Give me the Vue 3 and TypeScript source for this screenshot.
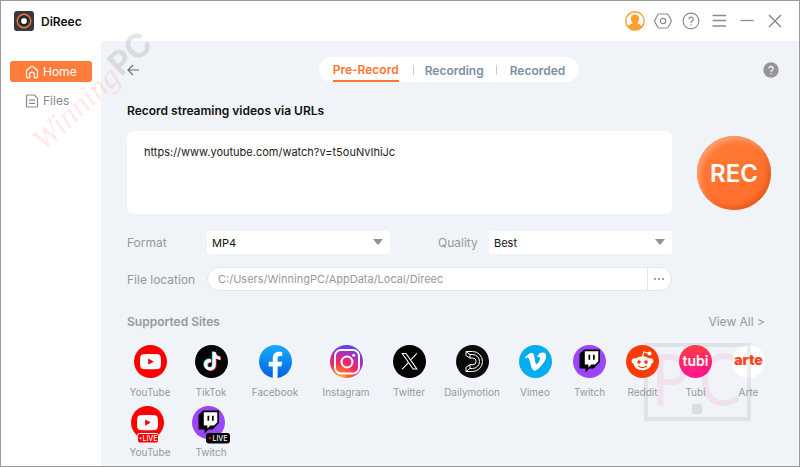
<script setup lang="ts">
import { ref } from 'vue'

interface Site {
  name: string
  icon: string
  live?: boolean
}

const tabs = ['Pre-Record', 'Recording', 'Recorded']
const activeTab = ref('Pre-Record')
const url = ref('https://www.youtube.com/watch?v=t5ouNvIhiJc')
const format = ref('MP4')
const quality = ref('Best')
const location = ref('C:/Users/WinningPC/AppData/Local/Direec')

const sites: Site[] = [
  { name: 'YouTube', icon: 'youtube' },
  { name: 'TikTok', icon: 'tiktok' },
  { name: 'Facebook', icon: 'facebook' },
  { name: 'Instagram', icon: 'instagram' },
  { name: 'Twitter', icon: 'x' },
  { name: 'Dailymotion', icon: 'dailymotion' },
  { name: 'Vimeo', icon: 'vimeo' },
  { name: 'Twitch', icon: 'twitch' },
  { name: 'Reddit', icon: 'reddit' },
  { name: 'Tubi', icon: 'tubi' },
  { name: 'Arte', icon: 'arte' },
  { name: 'YouTube', icon: 'youtube', live: true },
  { name: 'Twitch', icon: 'twitch', live: true },
]
</script>

<template>
  <div class="window">
    <svg class="sprite" aria-hidden="true">
      <defs>
        <linearGradient id="g-fb" x1="0" y1="0" x2="0" y2="1">
          <stop offset="0" stop-color="#18acfe" />
          <stop offset="1" stop-color="#0163e0" />
        </linearGradient>
        <radialGradient id="g-ig" cx="0.3" cy="1.05" r="1.05">
          <stop offset="0" stop-color="#fdd24f" />
          <stop offset="0.25" stop-color="#ff6a35" />
          <stop offset="0.5" stop-color="#f5265c" />
          <stop offset="0.75" stop-color="#b92bb6" />
          <stop offset="1" stop-color="#5b45e8" />
        </radialGradient>
        <linearGradient id="g-tubi" x1="0" y1="0" x2="0.2" y2="1">
          <stop offset="0" stop-color="#ff3f3a" />
          <stop offset="1" stop-color="#ff1690" />
        </linearGradient>
        <path id="note" d="M12.525.02c1.31-.02 2.61-.01 3.91-.02.08 1.53.63 3.09 1.75 4.17 1.12 1.11 2.7 1.62 4.24 1.79v4.03c-1.44-.05-2.89-.35-4.2-.97-.57-.26-1.1-.59-1.62-.93-.01 2.92.01 5.84-.02 8.75-.08 1.4-.54 2.79-1.35 3.94-1.31 1.92-3.58 3.17-5.91 3.21-1.43.08-2.86-.31-4.08-1.03-2.02-1.19-3.44-3.37-3.65-5.71-.02-.5-.03-1-.01-1.49.18-1.9 1.12-3.72 2.58-4.96 1.66-1.44 3.98-2.13 6.15-1.72.02 1.48-.04 2.96-.04 4.44-.99-.32-2.15-.23-3.02.37-.63.41-1.11 1.04-1.36 1.75-.21.51-.15 1.07-.14 1.61.24 1.64 1.82 3.02 3.5 2.87 1.12-.01 2.19-.66 2.77-1.61.19-.33.4-.67.41-1.06.1-1.79.06-3.57.07-5.36.01-4.03-.01-8.05.02-12.07z" />
      </defs>
      <symbol id="youtube" viewBox="0 0 33 33">
        <circle cx="16.500" cy="16.500" r="16.500" fill="#f00" />
        <path d="M9 9.300q7.500-.8 15 0 2.500.2 2.700 2.700.6 4.500 0 9.200-.2 2.500-2.700 2.700-7.500.8-15 0-2.500-.2-2.700-2.700-.6-4.700 0-9.200.2-2.500 2.700-2.700Z" fill="#fff" />
        <path d="M14.200 13.500v6.200l5.500-3.100Z" fill="#f00" />
      </symbol>
      <symbol id="tiktok" viewBox="0 0 33 33">
        <circle cx="16.500" cy="16.500" r="16.500" fill="#050505" />
        <use href="#note" transform="translate(7.200 6.500) scale(.77)" fill="#25f4ee" />
        <use href="#note" transform="translate(8.800 7.600) scale(.77)" fill="#fe2c55" />
        <use href="#note" transform="translate(8 7) scale(.77)" fill="#fff" />
      </symbol>
      <symbol id="facebook" viewBox="0 0 33 33">
        <circle cx="16.500" cy="16.500" r="16.500" fill="url(#g-fb)" />
        <path d="M13.800 33V21.500H9.700v-4.700h4.100v-3.500c0-4.300 2.300-6.500 6.100-6.500 1.500 0 2.700.2 3.300.3V11h-2.100c-1.900 0-2.500 1.100-2.500 2.500v3.300h4.600l-.8 4.700h-3.800V32.800q-2.400.4-4.800.2Z" fill="#fff" />
      </symbol>
      <symbol id="instagram" viewBox="0 0 33 33">
        <circle cx="16.500" cy="16.500" r="16.500" fill="url(#g-ig)" />
        <rect x="5" y="5" width="24" height="23.500" rx="6" fill="none" stroke="#fff" stroke-width="2" />
        <circle cx="17" cy="17" r="5.500" fill="none" stroke="#fff" stroke-width="2" />
        <circle cx="23.700" cy="10.200" r="1.500" fill="#fff" />
      </symbol>
      <symbol id="x" viewBox="0 0 33 33">
        <circle cx="16.500" cy="16.500" r="16.500" fill="#000" />
        <g fill="none" stroke="#fff" stroke-width="1.100">
          <path d="M9.300 8.500h3.700l10.800 15.500h-3.700Z" />
          <path d="M23.800 8.300 17.600 15M15.400 17.600 9 24.400" />
        </g>
      </symbol>
      <symbol id="dailymotion" viewBox="0 0 33 33">
        <circle cx="16.500" cy="16.500" r="16.500" fill="#0a0a0a" />
        <g fill="none" stroke="#fff" stroke-width="1" stroke-linejoin="round">
          <path d="M10 6.500h6.500a10 10 0 0 1 0 20H10v-4.200l4-2.600h2.800a3.300 3.300 0 0 0 0-6.600H14l-4-2.600Z" />
          <path d="m10 6.500 4 3h2.500a7 7 0 0 1 0 14H14l-4 3" />
          <path d="M14 9.500v3.600M14 19.700v3.800" />
        </g>
      </symbol>
      <symbol id="vimeo" viewBox="0 0 33 33">
        <circle cx="16.500" cy="16.500" r="16.500" fill="#00adef" />
        <path transform="translate(6 6) scale(.88)" fill="#fff" d="M23.977 6.416c-.105 2.338-1.739 5.543-4.894 9.609-3.268 4.247-6.026 6.370-8.290 6.370-1.409 0-2.578-1.294-3.553-3.881L5.322 11.400C4.603 8.816 3.834 7.522 3.010 7.522c-.179 0-.806.378-1.881 1.132L0 7.197c1.185-1.044 2.351-2.084 3.501-3.128C5.080 2.701 6.266 1.984 7.055 1.910c1.867-.18 3.016 1.100 3.447 3.838.465 2.953.789 4.789.971 5.507.539 2.450 1.131 3.674 1.776 3.674.502 0 1.256-.796 2.265-2.385 1.004-1.589 1.540-2.797 1.612-3.628.144-1.371-.395-2.061-1.614-2.061-.574 0-1.167.121-1.777.391 1.186-3.868 3.434-5.757 6.762-5.637 2.473.060 3.628 1.664 3.493 4.797Z" />
      </symbol>
      <symbol id="twitch" viewBox="0 0 33 33">
        <circle cx="16.500" cy="16.500" r="16.500" fill="#9b45ff" />
        <path d="M11 4.500h16V17l-6.500 6.500h-4L12.500 27.500v-4h-6V9Z" fill="#000" />
        <path d="M11.800 6.200h13.500v10l-3.200 3.200h-3.700l-3 3v-3h-3.600Z" fill="#fff" />
        <path d="M15.500 9.800h1.700v5h-1.700ZM20 9.800h1.700v5H20Z" fill="#000" />
      </symbol>
      <symbol id="reddit" viewBox="0 0 33 33">
        <circle cx="16.500" cy="16.500" r="16.500" fill="#ff3a00" />
        <path d="m16.500 12 1.300-5 4.500 1.200" fill="none" stroke="#fff" stroke-width="1.200" />
        <circle cx="23.500" cy="8.500" r="2" fill="#fff" />
        <circle cx="8.300" cy="16" r="2.700" fill="#fff" />
        <circle cx="24.700" cy="16" r="2.700" fill="#fff" />
        <ellipse cx="16.500" cy="18.300" rx="9" ry="7" fill="#fff" />
        <circle cx="13" cy="17" r="1.800" fill="#ff3a00" />
        <circle cx="20" cy="17" r="1.800" fill="#ff3a00" />
        <path d="M12.800 21.300q3.700 2.600 7.400 0" fill="none" stroke="#ff3a00" stroke-width="1.200" stroke-linecap="round" />
      </symbol>
      <symbol id="tubi" viewBox="0 0 33 33">
        <circle cx="16.500" cy="16.500" r="16.500" fill="url(#g-tubi)" />
      </symbol>
      <symbol id="arte" viewBox="0 0 33 33">
        <circle cx="16.500" cy="16.500" r="16.500" fill="#fff" />
      </symbol>
    </svg>

    <header class="titlebar">
      <svg class="logo" viewBox="0 0 20 20" aria-hidden="true">
        <rect width="20" height="20" rx="3" fill="#363a3e" />
        <circle cx="10" cy="10" r="6.800" fill="none" stroke="#f4743b" stroke-width="1.400" />
        <circle cx="10" cy="10" r="4.800" fill="#202327" />
        <circle cx="10" cy="10" r="2.900" fill="#fff" />
      </svg>
      <span class="brand">DiReec</span>
      <nav class="window-actions" aria-label="Window">
        <button type="button" aria-label="Account">
          <svg viewBox="0 0 20 20">
            <circle cx="10" cy="10" r="9.200" fill="#fff" stroke="#ff9f2e" stroke-width="1.400" />
            <path d="M10 3.400a4.200 4.200 0 0 1 4.200 4.300c0 1.700-.7 3-1.600 3.900v.8c2.400.6 3.600 1.500 4.300 2.800a8.600 8.600 0 0 1-13.800 0c.7-1.300 1.900-2.200 4.300-2.800v-.8a5.300 5.300 0 0 1-1.600-3.900A4.200 4.200 0 0 1 10 3.400Z" fill="#ff9f2e" />
          </svg>
        </button>
        <button type="button" aria-label="Settings">
          <svg viewBox="0 0 20 20" fill="none" stroke="#8b8b8b" stroke-width="1.200">
            <path d="M6 3h8q.8 0 1.200.7l3 5.600q.4.700 0 1.400l-3 5.600q-.4.700-1.200.7H6q-.8 0-1.200-.7l-3-5.600q-.4-.7 0-1.400l3-5.600Q5.200 3 6 3Z" />
            <circle cx="10" cy="10" r="2.700" />
          </svg>
        </button>
        <button type="button" aria-label="Help">
          <svg viewBox="0 0 20 20" fill="none" stroke="#8b8b8b" stroke-width="1.200">
            <circle cx="10" cy="10" r="7.900" />
            <path d="M7.800 8.200a2.200 2.200 0 1 1 3.400 1.900c-.8.500-1.200.9-1.200 1.900M10 13.200v1.300" />
          </svg>
        </button>
        <button type="button" aria-label="Menu">
          <svg viewBox="0 0 20 20" fill="none" stroke="#8b8b8b" stroke-width="1.300">
            <path d="M3.500 4.500h13.500M3.500 9.500h13.500M3.500 15h13.500" />
          </svg>
        </button>
        <button type="button" aria-label="Minimize">
          <svg viewBox="0 0 20 20" fill="none" stroke="#8b8b8b" stroke-width="1.300"><path d="M3.500 9.500h13" /></svg>
        </button>
        <button type="button" aria-label="Close">
          <svg viewBox="0 0 20 20" fill="none" stroke="#8b8b8b" stroke-width="1.500"><path d="m4 4 12 12M16 4 4 16" /></svg>
        </button>
      </nav>
    </header>

    <div class="body">
      <nav class="sidebar" aria-label="Sections">
        <a class="nav-link current" href="#home">
          <svg viewBox="0 0 14 14" fill="none" stroke="currentColor" stroke-width="1.200" stroke-linejoin="round">
            <path d="M4.600 12.800H2.500q-1 0-1-1V6q0-.6.5-1l4.200-3.500q.8-.7 1.600 0L12 5q.5.400.5 1v5.800q0 1-1 1H9.400V9.600a2.400 2.400 0 0 0-4.800 0Z" />
          </svg>
          Home
        </a>
        <a class="nav-link" href="#files">
          <svg viewBox="0 0 14 14" fill="none" stroke="currentColor" stroke-width="1.200" stroke-linejoin="round">
            <path d="M2.500 1h6.700L12.500 4.300v7.700q0 1-1 1h-9q-1 0-1-1V2q0-1 1-1ZM4 6.200h6M4 9.300h6" />
          </svg>
          Files
        </a>
      </nav>

      <main class="content">
        <div class="toolbar">
          <button class="icon-button" type="button" aria-label="Back">
            <svg viewBox="0 0 12 12" fill="none" stroke="#6f6f6f" stroke-width="1.200"><path d="M12 6H1M6 1 1 6l5 5" /></svg>
          </button>
          <div class="tabs" role="tablist">
            <button
              v-for="tab in tabs"
              :key="tab"
              class="tab"
              :class="{ active: tab === activeTab }"
              type="button"
              role="tab"
              :aria-selected="tab === activeTab"
              @click="activeTab = tab"
            ><span>{{ tab }}</span></button>
          </div>
          <button class="icon-button help" type="button" aria-label="Help">
            <svg viewBox="0 0 16 16">
              <circle cx="8" cy="8" r="7.700" fill="#969696" />
              <path d="M5.900 6.500a2.100 2.100 0 1 1 3.300 1.700c-.8.500-1.200.9-1.200 1.700M8 11v1.300" fill="none" stroke="#fff" stroke-width="1.200" />
            </svg>
          </button>
        </div>

        <form class="recorder" @submit.prevent>
          <label class="heading" for="url">Record streaming videos via URLs</label>
          <textarea id="url" v-model="url" class="url-box" spellcheck="false"></textarea>
          <button class="record" type="submit">REC</button>
          <div class="options">
            <label for="format">Format</label>
            <div class="select-wrap">
              <select id="format" v-model="format">
                <option>MP4</option>
                <option>MP3</option>
              </select>
              <svg viewBox="0 0 10 6" aria-hidden="true"><path d="M0 0h10L6 5q-1 1-2 0Z" fill="#929292" /></svg>
            </div>
            <label class="quality-label" for="quality">Quality</label>
            <div class="select-wrap">
              <select id="quality" v-model="quality">
                <option>Best</option>
                <option>Good</option>
              </select>
              <svg viewBox="0 0 10 6" aria-hidden="true"><path d="M0 0h10L6 5q-1 1-2 0Z" fill="#929292" /></svg>
            </div>
            <label for="location">File location</label>
            <div class="path">
              <input id="location" v-model="location" type="text" spellcheck="false" />
              <button type="button" aria-label="Browse">
                <svg viewBox="0 0 12 4" fill="#777"><circle cx="2" cy="2" r=".9" /><circle cx="6" cy="2" r=".9" /><circle cx="10" cy="2" r=".9" /></svg>
              </button>
            </div>
          </div>
        </form>

        <section class="supported">
          <div class="supported-head">
            <h2>Supported Sites</h2>
            <a href="#sites">View All &gt;</a>
          </div>
          <ul class="sites">
            <li v-for="(site, i) in sites" :key="i">
              <svg v-if="site.live" class="live-icon" viewBox="0 0 38 38" aria-hidden="true">
                <use :href="`#${site.icon}`" width="33" height="33" />
                <g v-if="site.icon === 'youtube'">
                  <rect x="6.500" y="27.500" width="21" height="9.500" rx="2" fill="#f00" stroke="#fff" />
                  <circle cx="9.500" cy="32.300" r="1" fill="#fff" />
                  <text x="11.500" y="35" font-size="7" font-weight="500" fill="#fff">LIVE</text>
                </g>
                <g v-else>
                  <rect x="14" y="27" width="24" height="10.500" rx="3" fill="#000" />
                  <circle cx="18" cy="32.300" r="1.300" fill="#f00" />
                  <text x="20.500" y="35" font-size="7" font-weight="500" fill="#fff">LIVE</text>
                </g>
              </svg>
              <svg v-else class="site-icon" viewBox="0 0 33 33" aria-hidden="true">
                <use :href="`#${site.icon}`" width="33" height="33" />
                <text v-if="site.icon === 'tubi'" class="wordmark" x="16.500" y="21">tubi</text>
                <text v-if="site.icon === 'arte'" class="wordmark arte" x="16.500" y="20">arte</text>
              </svg>
              <span>{{ site.name }}</span>
            </li>
          </ul>
        </section>
      </main>
    </div>

    <svg class="mark mark-name" viewBox="0 0 140 130" aria-hidden="true">
      <g transform="translate(23 123) rotate(-43)">
        <text class="script" x="0" y="0">Winning</text>
        <text class="bold" x="107" y="-2">PC</text>
      </g>
    </svg>
    <svg class="mark mark-screen" viewBox="0 0 107 78" aria-hidden="true">
      <rect x="2" y="2" width="103" height="74" fill="none" stroke="#777" stroke-opacity=".13" stroke-width="4" />
      <g class="mark-letters">
        <text x="7" y="62">P</text>
        <text x="54" y="62">C</text>
      </g>
      <rect x="48" y="61" width="10" height="10" rx="2" fill="#777" fill-opacity=".18" />
    </svg>
  </div>
</template>

<style>
body {
  margin: 0;
}
</style>

<style scoped>
.window {
  position: relative;
  display: flex;
  flex-direction: column;
  box-sizing: border-box;
  min-height: 100vh;
  border: 1px solid #9b9b9b;
  overflow: hidden;
  background: #fff;
  color: #999;
  font-family: Inter, "Open Sans", sans-serif;
  font-size: 12px;
}
button,
input,
select,
textarea {
  margin: 0;
  padding: 0;
  border: 0;
  background: none;
  color: inherit;
  font: inherit;
  outline: none;
}
button {
  cursor: pointer;
}
a {
  color: inherit;
  text-decoration: none;
}
svg {
  display: block;
}
.sprite {
  position: absolute;
  width: 0;
  height: 0;
}
.titlebar {
  display: flex;
  align-items: center;
  height: 40px;
  padding: 0 14px 0 13px;
}
.logo {
  width: 20px;
  height: 20px;
}
.brand {
  margin-left: 7px;
  color: #111;
  font-weight: 600;
}
.window-actions {
  display: flex;
  gap: 8px;
  margin-left: auto;
}
.window-actions button {
  width: 20px;
  height: 20px;
}
.window-actions svg {
  width: 20px;
  height: 20px;
}
.body {
  display: flex;
  flex: 1;
}
.sidebar {
  display: flex;
  flex: 0 0 100px;
  flex-direction: column;
  gap: 8px;
  box-sizing: border-box;
  padding: 20px 9px;
}
.nav-link {
  display: flex;
  align-items: center;
  gap: 4px;
  height: 21px;
  padding-left: 15px;
  border-radius: 3px;
  color: #888;
}
.nav-link svg {
  width: 14px;
  height: 14px;
}
.nav-link.current {
  background: #ff7c3b;
  color: #fff;
}
.content {
  flex: 1;
  min-width: 0;
  padding: 16px 20px 4px 26px;
  background: #f0f3f8;
}
.toolbar {
  display: grid;
  grid-template-columns: 1fr auto 1fr;
  align-items: center;
  padding-right: 8px;
}
.icon-button svg {
  width: 12px;
  height: 12px;
}
.help {
  justify-self: end;
  margin-right: -8px;
}
.help svg {
  width: 16px;
  height: 16px;
}
.tabs {
  display: flex;
  height: 25px;
  border-radius: 13px;
  background: #fff;
}
.tab {
  position: relative;
  padding: 0 12px;
  color: #7d8ea5;
  font-weight: 600;
}
.tab:first-child,
.tab:last-child {
  padding: 0 14px;
}
.tab + .tab::before {
  position: absolute;
  top: 8px;
  left: 0;
  width: 1px;
  height: 10px;
  background: #ccc;
  content: "";
}
.tab span {
  display: block;
  height: 23px;
  line-height: 25px;
}
.tab.active {
  color: #ff7430;
}
.tab.active span {
  border-bottom: 2px solid #ff7430;
}
.recorder {
  display: grid;
  grid-template-columns: 1fr 74px;
  column-gap: 25px;
  padding: 20px 8px 0 0;
}
.heading {
  grid-column: 1 / -1;
  color: #111;
  font-weight: 600;
  line-height: 18px;
}
.url-box {
  box-sizing: border-box;
  height: 83px;
  margin-top: 11px;
  padding: 13px 17px;
  border-radius: 6px;
  background: #fff;
  color: #222;
  font-size: 11px;
  line-height: 16px;
  resize: none;
}
.record {
  align-self: center;
  width: 74px;
  height: 74px;
  margin-top: 12px;
  border-radius: 50%;
  background: linear-gradient(145deg, #ff7d38, #ff6b28);
  box-shadow: inset 3px 4px 5px #ff9d6e, inset -3px -3px 5px #e65c1a;
  color: #fff;
  font-size: 24px;
  font-weight: 600;
}
.options {
  display: grid;
  grid-template-columns: 80px 1fr 99px 1fr;
  align-items: center;
  row-gap: 13px;
  margin-top: 17px;
}
.quality-label {
  padding-left: 48px;
}
.select-wrap {
  position: relative;
}
.select-wrap select {
  display: block;
  width: 100%;
  height: 23px;
  padding: 0 24px 0 5px;
  border-radius: 3px;
  appearance: none;
  background: #fff;
  color: #111;
  font-size: 11px;
}
.select-wrap svg {
  position: absolute;
  top: 8px;
  right: 7px;
  width: 10px;
  height: 6px;
  pointer-events: none;
}
.path {
  display: flex;
  grid-column: 2 / -1;
  box-sizing: border-box;
  height: 24px;
  border: 1px solid #e1e6ef;
  border-radius: 12px;
  overflow: hidden;
  background: #fff;
}
.path input {
  flex: 1;
  min-width: 0;
  padding: 0 10px;
  font-size: 11px;
}
.path button {
  width: 24px;
  padding-left: 5px;
  border-left: 1px solid #e1e6ef;
}
.path svg {
  width: 12px;
  height: 4px;
}
.supported {
  padding: 22px 14px 0 0;
}
.supported-head {
  display: flex;
  justify-content: space-between;
  line-height: 18px;
}
.supported-head h2 {
  margin: 0;
  font-size: 12px;
  font-weight: 600;
}
.sites {
  display: grid;
  grid-template-columns: 46px 36px 52px 50px 36px 50px 36px repeat(4, 33px);
  gap: 7px 20px;
  margin: 14px 0 0;
  padding: 0;
  list-style: none;
}
.sites li {
  display: flex;
  flex-direction: column;
  align-items: center;
  font-size: 10px;
  line-height: 14px;
  white-space: nowrap;
}
.site-icon {
  width: 33px;
  height: 33px;
  margin-bottom: 7px;
}
.live-icon {
  width: 38px;
  height: 38px;
  margin-bottom: 1px;
}
.wordmark {
  fill: #fff;
  font-size: 14px;
  font-weight: 600;
  text-anchor: middle;
}
.wordmark.arte {
  fill: #fa481c;
  font-weight: 900;
}
.mark {
  position: absolute;
  pointer-events: none;
}
.mark-name {
  top: 28px;
  left: 20px;
  width: 140px;
  height: 130px;
}
.script {
  fill: #f55;
  fill-opacity: 0.15;
  font-family: "Liberation Serif", serif;
  font-size: 32px;
  font-style: italic;
}
.bold {
  fill: #777;
  fill-opacity: 0.2;
  font-size: 33px;
  font-weight: 700;
}
.mark-screen {
  right: 48px;
  bottom: 45px;
  width: 107px;
  height: 78px;
}
.mark-letters {
  fill: #f06;
  fill-opacity: 0.07;
  font-family: "DejaVu Sans Condensed", "DejaVu Sans", sans-serif;
  font-size: 70px;
}
</style>
